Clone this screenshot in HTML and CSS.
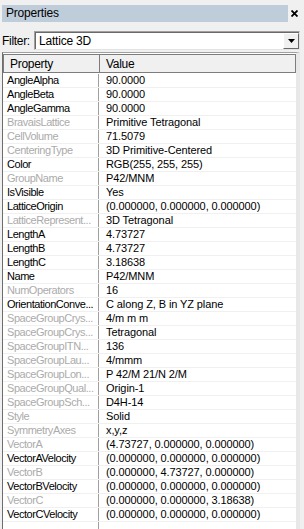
FILE: index.html
```html
<!DOCTYPE html>
<html lang="en">

<head>
    <meta charset="UTF-8">
    <meta name="viewport" content="width=device-width, initial-scale=1.0">
    <title>Properties</title>

    <link rel="stylesheet" href="styles.css">
</head>

<body>
    <div class="panel">
        <div class="titlebar">
            <div class="title">Properties</div>
            <svg class="close" width="7" height="7" viewBox="0 0 7 7">
                <path d="M0.5 0.5 L6.5 6.5 M6.5 0.5 L0.5 6.5" stroke="#000" stroke-width="1.8" />
            </svg>
        </div>

        <div class="filter">
            <label for="filter">Filter:</label>
            <div class="combo" id="filter">
                <span class="combo-text">Lattice 3D</span>
                <span class="drop">
                    <svg width="7" height="4" viewBox="0 0 7 4"><path d="M0 0 H7 L3.5 4 Z" fill="#000" /></svg>
                </span>
            </div>
        </div>

        <div class="grid">
            <div class="head">
                <div class="hcell">Property</div>
                <div class="hcell">Value</div>
            </div>
            <div class="row"><div class="name">AngleAlpha</div><div class="value">90.0000</div></div>
            <div class="row"><div class="name">AngleBeta</div><div class="value">90.0000</div></div>
            <div class="row"><div class="name">AngleGamma</div><div class="value">90.0000</div></div>
            <div class="row ro"><div class="name">BravaisLattice</div><div class="value">Primitive Tetragonal</div></div>
            <div class="row ro"><div class="name">CellVolume</div><div class="value">71.5079</div></div>
            <div class="row ro"><div class="name">CenteringType</div><div class="value">3D Primitive-Centered</div></div>
            <div class="row"><div class="name">Color</div><div class="value">RGB(255, 255, 255)</div></div>
            <div class="row ro"><div class="name">GroupName</div><div class="value">P42/MNM</div></div>
            <div class="row"><div class="name">IsVisible</div><div class="value">Yes</div></div>
            <div class="row"><div class="name">LatticeOrigin</div><div class="value">(0.000000, 0.000000, 0.000000)</div></div>
            <div class="row ro"><div class="name">LatticeRepresent...</div><div class="value">3D Tetragonal</div></div>
            <div class="row"><div class="name">LengthA</div><div class="value">4.73727</div></div>
            <div class="row"><div class="name">LengthB</div><div class="value">4.73727</div></div>
            <div class="row"><div class="name">LengthC</div><div class="value">3.18638</div></div>
            <div class="row"><div class="name">Name</div><div class="value">P42/MNM</div></div>
            <div class="row ro"><div class="name">NumOperators</div><div class="value">16</div></div>
            <div class="row"><div class="name">OrientationConve...</div><div class="value">C along Z, B in YZ plane</div></div>
            <div class="row ro"><div class="name">SpaceGroupCrys...</div><div class="value">4/m m m</div></div>
            <div class="row ro"><div class="name">SpaceGroupCrys...</div><div class="value">Tetragonal</div></div>
            <div class="row ro"><div class="name">SpaceGroupITN...</div><div class="value">136</div></div>
            <div class="row ro"><div class="name">SpaceGroupLau...</div><div class="value">4/mmm</div></div>
            <div class="row ro"><div class="name">SpaceGroupLon...</div><div class="value">P 42/M 21/N 2/M</div></div>
            <div class="row ro"><div class="name">SpaceGroupQual...</div><div class="value">Origin-1</div></div>
            <div class="row ro"><div class="name">SpaceGroupSch...</div><div class="value">D4H-14</div></div>
            <div class="row ro"><div class="name">Style</div><div class="value">Solid</div></div>
            <div class="row ro"><div class="name">SymmetryAxes</div><div class="value">x,y,z</div></div>
            <div class="row ro"><div class="name">VectorA</div><div class="value">(4.73727, 0.000000, 0.000000)</div></div>
            <div class="row"><div class="name">VectorAVelocity</div><div class="value">(0.000000, 0.000000, 0.000000)</div></div>
            <div class="row ro"><div class="name">VectorB</div><div class="value">(0.000000, 4.73727, 0.000000)</div></div>
            <div class="row"><div class="name">VectorBVelocity</div><div class="value">(0.000000, 0.000000, 0.000000)</div></div>
            <div class="row ro"><div class="name">VectorC</div><div class="value">(0.000000, 0.000000, 3.18638)</div></div>
            <div class="row"><div class="name">VectorCVelocity</div><div class="value">(0.000000, 0.000000, 0.000000)</div></div>
            <div class="rest"><div class="name"></div><div class="value"></div></div>
        </div>
    </div>
</body>

</html>
```

FILE: styles.css
```css
body {
    margin: 0;
    background-color: #f0f0f0;
    font-family: 'Liberation Sans', Arial, sans-serif;
    font-size: 11px;
    letter-spacing: -0.3px;
    color: #000;
    overflow: hidden;
}

.panel {
    height: 529px;
    display: flex;
    flex-direction: column;
    padding: 5px 4px 0 2px;
    box-sizing: border-box;
}

/* Title bar */
.titlebar {
    display: flex;
    align-items: center;
    height: 17px;
}

.title {
    width: 282px;
    height: 17px;
    line-height: 17px;
    padding-left: 4px;
    background-color: #bfcddb;
    font-size: 12px;
    letter-spacing: -0.2px;
}

.close {
    margin-left: 3px;
}

/* Filter row */
.filter {
    display: flex;
    align-items: center;
    margin-top: 9px;
    height: 19px;
}

.filter label {
    width: 32px;
    font-size: 12px;
    letter-spacing: -0.3px;
}

.combo {
    flex: 1;
    display: flex;
    align-items: center;
    height: 19px;
    box-sizing: border-box;
    background-color: #fff;
    border: 1px solid #a0a0a0;
    border-right-color: #e3e3e3;
    border-bottom-color: #e3e3e3;
    box-shadow: inset 1px 1px 0 #696969;
}

.combo-text {
    flex: 1;
    padding-left: 4px;
    font-size: 12px;
    letter-spacing: -0.2px;
}

.drop {
    width: 16px;
    height: 16px;
    display: flex;
    align-items: center;
    justify-content: center;
    box-sizing: border-box;
    background-color: #f0f0f0;
    border: 1px solid #fff;
    border-right-color: #696969;
    border-bottom-color: #696969;
}

/* Grid */
.grid {
    flex: 1;
    margin-top: 2px;
    display: flex;
    flex-direction: column;
    background-color: #fff;
    border-left: 1px solid #6d6d6d;
    border-top: 1px solid #a0a0a0;
    border-right: 4px solid #e8e8e8;
}

.head {
    display: flex;
    height: 19px;
    margin-top: 1px;
    border-bottom: 1px solid #fff;
}

.hcell {
    height: 19px;
    line-height: 18px;
    box-sizing: border-box;
    background-color: #f0f0f0;
    border: 1px solid #7d7d7d;
    font-size: 12px;
    letter-spacing: -0.3px;
}

.hcell:first-child {
    width: 97px;
    padding-left: 6px;
}

.hcell:last-child {
    flex: 1;
    padding-left: 6px;
    border-left: none;
}

.row,
.rest {
    display: flex;
    height: 14px;
    line-height: 13px;
    box-sizing: border-box;
    border-bottom: 1px solid #f0f0f0;
}

.rest {
    flex: 1;
    border-bottom: none;
}

.name {
    width: 96px;
    padding-left: 4px;
    box-sizing: border-box;
    border-right: 1px solid #a0a0a0;
    white-space: nowrap;
    overflow: hidden;
    letter-spacing: -0.45px;
}

.value {
    flex: 1;
    padding-left: 7px;
    white-space: nowrap;
    letter-spacing: -0.1px;
}

.ro .name {
    color: #ababab;
}
```
